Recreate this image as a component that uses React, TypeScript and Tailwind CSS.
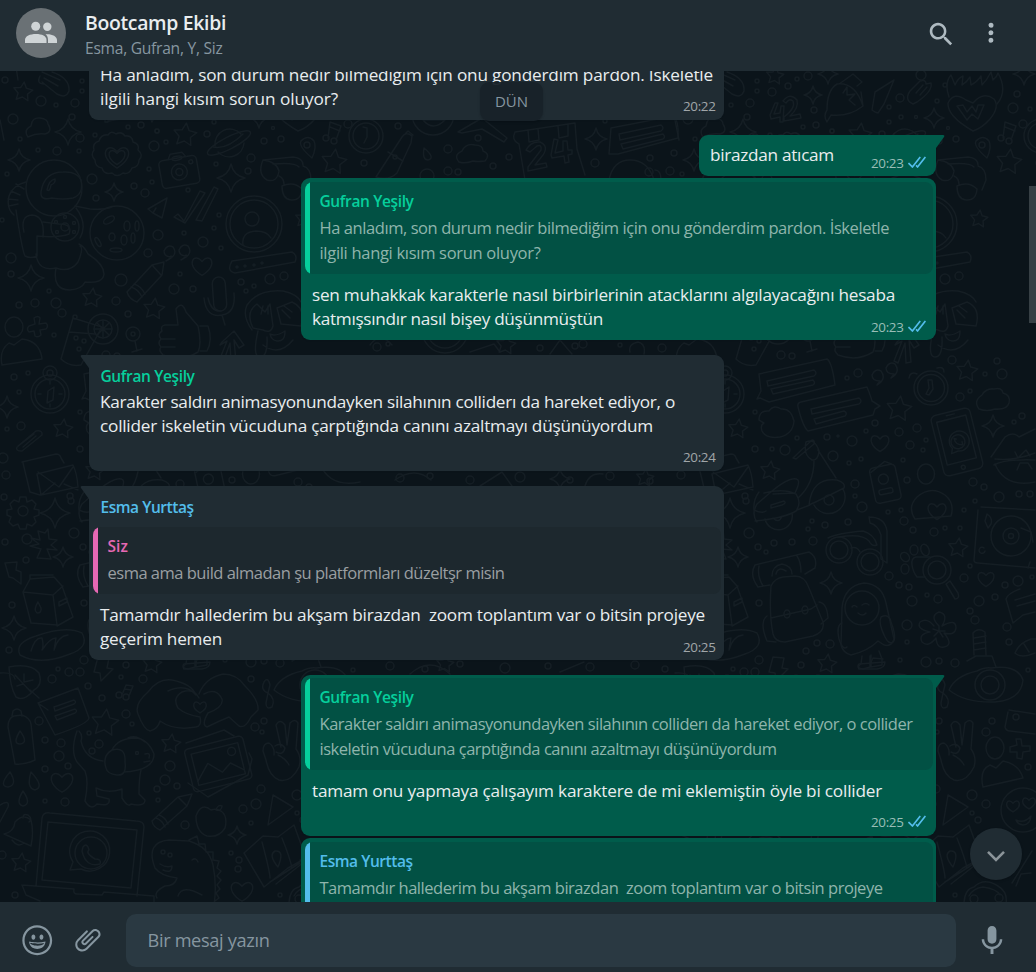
import { useLayoutEffect, useRef, useState, type ReactNode } from "react";

/* ---------- Text line that fills an exact measure ---------- */

function Line({ w, className = "", children }: { w: number; className?: string; children: string }) {
  const ref = useRef<HTMLSpanElement>(null);
  const [spacing, setSpacing] = useState(0);
  useLayoutEffect(() => {
    const el = ref.current;
    if (!el) return;
    el.style.letterSpacing = "0px";
    setSpacing((w - el.getBoundingClientRect().width) / children.length);
  }, [w, children]);
  return (
    <span className={`block whitespace-pre ${className}`}>
      <span ref={ref} style={{ letterSpacing: `${spacing}px` }}>
        {children}
      </span>
    </span>
  );
}

/* ---------- Wallpaper ---------- */

type P3 = [number, number, number];

const RINGS: P3[] = [
  [5, 80, 3], [41, 101, 5], [56, 105, 2], [75, 103, 4], [82, 91, 2], [13, 119, 5], [72, 117, 3], [80, 138, 4],
  [20, 139, 2], [95, 135, 2], [38, 150, 2], [57, 151, 4], [79, 151, 2], [7, 174, 2], [141, 125, 3], [154, 146, 5],
  [166, 142, 2], [207, 134, 3], [157, 131, 2], [264, 141, 3], [281, 139, 3], [216, 164, 2], [251, 158, 4], [248, 171, 3],
  [188, 190, 2], [92, 179, 5], [134, 186, 3], [145, 193, 4], [149, 169, 2], [96, 198, 3], [152, 182, 2], [158, 235, 5],
  [203, 242, 5], [221, 248, 2], [219, 215, 2], [214, 228, 2], [148, 253, 4], [184, 233, 2], [121, 280, 6], [174, 289, 5],
  [180, 274, 2], [193, 289, 3], [116, 301, 4], [128, 314, 3], [56, 303, 5], [35, 303, 4], [62, 313, 4], [19, 305, 3],
  [49, 291, 2], [11, 258, 5], [11, 274, 3], [241, 282, 3], [254, 286, 2], [270, 279, 5], [284, 276, 4], [246, 291, 2],
  [54, 335, 2], [75, 317, 2], [2, 220, 2], [14, 377, 3], [28, 373, 2], [19, 392, 2], [21, 426, 4], [80, 449, 3],
  [80, 412, 2], [7, 429, 2], [6, 475, 4], [3, 458, 5], [106, 355, 4], [117, 356, 3], [183, 373, 4], [172, 378, 2],
  [277, 360, 4], [310, 374, 2], [322, 361, 3], [327, 374, 5], [285, 397, 4], [295, 391, 2], [200, 423, 3], [191, 431, 2],
  [224, 432, 4], [242, 428, 4], [251, 440, 2], [248, 450, 2], [235, 445, 4], [177, 441, 5], [152, 437, 3], [163, 436, 1],
  [110, 450, 5], [158, 456, 5], [122, 438, 2], [97, 449, 2], [174, 463, 2], [186, 459, 2], [180, 484, 4], [180, 496, 2],
  [187, 507, 5], [228, 460, 2], [232, 480, 3], [298, 482, 4], [309, 487, 3], [324, 497, 5], [300, 501, 2], [289, 510, 2],
  [213, 512, 2], [226, 510, 2], [229, 521, 4], [259, 532, 4], [238, 530, 3], [285, 528, 2], [270, 528, 2], [344, 494, 3],
  [355, 494, 3], [339, 422, 2], [347, 416, 3], [71, 501, 3], [74, 533, 5], [70, 496, 3], [4, 497, 3], [27, 539, 5],
  [5, 542, 3], [26, 560, 3], [137, 521, 2], [133, 529, 2], [150, 525, 3], [173, 522, 3], [138, 541, 4], [117, 542, 3],
  [99, 543, 3], [91, 552, 2], [83, 547, 3], [214, 576, 4], [224, 585, 3], [234, 587, 3], [237, 601, 5],
  [252, 595, 2], [263, 599, 4], [289, 578, 4], [295, 566, 2], [304, 601, 5], [320, 597, 3], [330, 585, 3], [343, 581, 5],
  [357, 577, 2], [295, 611, 3], [300, 620, 4], [232, 625, 5], [232, 642, 2], [225, 660, 2], [251, 662, 5], [264, 661, 3],
  [280, 663, 4], [332, 627, 4], [334, 642, 3], [353, 670, 2], [12, 605, 3], [84, 603, 3], [9, 650, 3], [84, 660, 4],
  [131, 651, 3], [142, 643, 3], [155, 644, 4], [58, 669, 2], [69, 672, 4], [80, 672, 4], [52, 679, 4],
  [88, 686, 3], [126, 665, 3], [143, 679, 4], [121, 677, 2], [102, 698, 3], [39, 721, 4], [89, 733, 2], [99, 744, 4],
  [92, 751, 3], [45, 740, 3], [61, 743, 4], [59, 756, 5], [68, 766, 3], [45, 769, 3], [126, 714, 4], [132, 724, 2],
  [170, 766, 5], [165, 780, 5], [177, 786, 3], [157, 789, 3], [158, 800, 2], [65, 802, 4], [45, 801, 2], [264, 721, 3],
  [255, 727, 4], [262, 732, 2], [261, 789, 4], [256, 804, 5], [243, 809, 4], [251, 823, 2], [297, 795, 5], [185, 825, 4],
  [239, 860, 3], [231, 853, 2], [238, 869, 3], [2, 855, 4], [15, 895, 3], [280, 895, 2], [251, 679, 3], [297, 813, 2],
  [303, 820, 3], [311, 804, 4], [311, 732, 4], [317, 721, 3], [353, 767, 3], [82, 81, 2],
  [97, 92, 4], [113, 86, 3], [133, 76, 4], [122, 79, 2], [139, 110, 3], [157, 131, 2], [128, 127, 2],
  [225, 98, 4], [226, 117, 2], [214, 122, 2], [241, 117, 1.5], [262, 101, 2], [273, 128, 1.5], [338, 108, 5], [355, 109, 2], [342, 94, 3],
  [246, 75, 5], [214, 107, 2], [270, 85, 2], [348, 124, 4], [398, 126, 3], [478, 138, 3], [448, 149, 4], [448, 171, 4], [458, 172, 3], [493, 166, 3], [509, 157, 3],
  [427, 176, 7], [590, 111, 3], [605, 121, 2], [595, 163, 4], [650, 158, 3], [670, 171, 4], [649, 172, 4], [674, 153, 3],
  [364, 163, 3], [377, 347, 4], [388, 344, 2], [575, 346, 3], [583, 344, 4], [620, 345, 2], [662, 348, 4], [540, 348, 3],
  [400, 478, 4], [430, 476, 3], [470, 480, 4], [520, 477, 5], [570, 480, 3], [610, 476, 4], [650, 481, 3], [390, 666, 4],
  [425, 669, 3], [460, 664, 3], [505, 668, 5], [548, 666, 3], [590, 667, 4], [635, 665, 4], [665, 669, 3],
];

const STARS: P3[] = [
  [23, 92, 10], [185, 135, 12], [334, 162, 13], [92, 298, 10], [154, 309, 11], [63, 429, 10], [292, 371, 11],
  [224, 409, 13], [95, 471, 10], [283, 548, 10], [152, 664, 10], [105, 723, 14], [171, 744, 10], [21, 863, 10],
  [304, 219, 9], [506, 345, 10], [100, 76, 9], [445, 664, 9], [645, 478, 9],
];

const SPARKS: P3[] = [
  [68, 132, 13], [19, 160, 11], [231, 178, 14], [114, 192, 9], [31, 278, 13], [7, 407, 11], [318, 426, 11],
  [55, 513, 15], [63, 557, 10], [14, 628, 12], [156, 583, 11], [237, 835, 9], [138, 95, 9], [153, 74, 10],
  [259, 118, 10], [596, 139, 11], [349, 74, 11], [560, 479, 10],
];

const HEARTS: P3[] = [
  [117, 157, 13], [117, 157, 9], [202, 266, 11], [205, 443, 10], [262, 511, 10], [311, 579, 9], [200, 707, 7],
  [62, 782, 12], [242, 891, 12], [338, 806, 7], [354, 803, 7],
];

const starPath = (cx: number, cy: number, r: number) => {
  let d = "";
  for (let i = 0; i < 10; i++) {
    const a = (i * Math.PI) / 5 - Math.PI / 2 + 0.12;
    const q = i % 2 ? r * 0.5 : r;
    d += `${i ? "L" : "M"}${(cx + q * Math.cos(a)).toFixed(1)} ${(cy + q * Math.sin(a)).toFixed(1)}`;
  }
  return d + "Z";
};

const sparkPath = (x: number, y: number, r: number) => {
  const k = r * 0.18;
  return `M${x} ${y - r}Q${x + k} ${y - k} ${x + r} ${y}Q${x + k} ${y + k} ${x} ${y + r}Q${x - k} ${y + k} ${x - r} ${y}Q${x - k} ${y - k} ${x} ${y - r}Z`;
};

const heartPath = (x: number, y: number, r: number) =>
  `M${x} ${y + r * 0.85}C${x - r * 1.6} ${y - r * 0.1} ${x - r * 0.7} ${y - r * 1.3} ${x} ${y - r * 0.4}C${x + r * 0.7} ${y - r * 1.3} ${x + r * 1.6} ${y - r * 0.1} ${x} ${y + r * 0.85}Z`;

function Doodles() {
  return (
    <g>
      {RINGS.map(([x, y, r], i) => <circle key={i} cx={x} cy={y} r={r} />)}
      {STARS.map(([x, y, r], i) => <path key={i} d={starPath(x, y, r)} />)}
      {SPARKS.map(([x, y, r], i) => <path key={i} d={sparkPath(x, y, r)} />)}
      {HEARTS.map(([x, y, r], i) => <path key={i} d={heartPath(x, y, r)} />)}

      {/* glove, cloud, badge */}
      <path d="M40 76q-4 8 4 8m-2-12l18 8m-16-2l14 8M52 72q18 6 17 19q-3 8-12 3L42 82" />
      <path d="M28 137q-5-7 3-11q1-9 9-8q8 1 8 6q5 8-3 10q-9-1-17 3z" />
      <path d="M116 134q6-3 9 2q7-1 8 6q7 2 5 8q6 5 1 10q0 7-7 8q-3 7-9 5q-6 5-11 0q-8 2-10-5q-7-1-7-8q-5-5-1-10q-2-7 5-9q2-7 9-6q3-5 8-1z" />
      {/* planet */}
      <path d="M215 146a15 15 0 0 1 26-12M218 152a15 15 0 0 0 26-9" />
      <ellipse cx="229" cy="143" rx="24" ry="6" transform="rotate(-27 229 143)" />
      <path d="M213 147q14 3 30-13" />
      {/* camera */}
      <g transform="rotate(-10 179 170)">
        <rect x="160" y="158" width="38" height="28" rx="4" />
        <path d="M170 158l3-5h12l3 5" />
        <ellipse cx="179" cy="158" rx="5" ry="2" />
        <circle cx="179" cy="172" r="8" />
        <circle cx="179" cy="172" r="3.5" />
        <circle cx="192" cy="164" r="2" />
      </g>
      {/* pin, music */}
      <path d="M312 158q-14-12-11-17q7-7 13 0q3 6-2 17z" />
      <circle cx="307" cy="145" r="3" />
      <path d="M328 138l2-16 11 4-5 14M330 127l10 4" />
      <circle cx="326" cy="138" r="3" /><circle cx="334" cy="141" r="3" />
      {/* astronaut */}
      <circle cx="54" cy="188" r="28" />
      <path d="M41 192q3-20 22-20q14-1 18 8q3 14-8 18q-10 2-21 0q-12 3-11-6z M47 190q2-10 8-11q1 4-4 6q-1 7-4 5z" />
      <path d="M26 182q-13 3-17 14q-3 12 5 19m2-31l8 5m-13 2l9 4m-12 4l10 1m-9 6l9-2M16 210q6 40 9 46q6 3 12 0v-20q22 2 32-2q4-10-10-10l-16-2M24 232q-4-16 8-17q13 1 11 22M76 208q12 16 4 30M36 254q2 18 20 14q14 5 22-6q6-14 2-16M56 268q-4 22 14 22q12-1 15-8q18 2 19-8q0-10-16-20q-4-8-9-10M75 206l15 3q14 1 22-2" />
      <circle cx="65" cy="227" r="14" /><circle cx="65" cy="227" r="4" />
      <circle cx="65" cy="217" r="1.5" /><circle cx="74" cy="223" r="1.5" /><circle cx="74" cy="232" r="1.5" /><circle cx="56" cy="222" r="1.5" /><circle cx="57" cy="232" r="1.5" />
      {/* moon */}
      <circle cx="117" cy="233" r="27" />
      <ellipse cx="109" cy="220" rx="6" ry="3" transform="rotate(-30 109 220)" /><ellipse cx="127" cy="226" rx="3" ry="5" /><ellipse cx="112" cy="237" rx="3" ry="4" />
      <ellipse cx="124" cy="240" rx="3" ry="5" /><ellipse cx="137" cy="226" rx="2" ry="5" /><ellipse cx="116" cy="250" rx="6" ry="2" /><ellipse cx="133" cy="238" rx="2" ry="5" /><ellipse cx="98" cy="242" rx="2" ry="5" transform="rotate(-30 98 242)" />
      {/* paper plane, ticks */}
      <path d="M167 198l-19 11 5 4 9 5zM153 213l3-5" />
      <path d="M174 217l4-3 6 7 16-30 5 2-20 30zM196 220l18-33 4 2-16 32z" />
      {/* sunglasses */}
      <path d="M263 160q-6 14 4 20q10 3 12-9q-2-9-16-11zM282 186q0 13 9 14q10 1 11-11q-8-8-20-3zM279 176q5 2 5 9M263 160l30-3q10 1 10 8m-4 2q-4-5-26-3M303 166q8 2 8 14l-4 10" />
      {/* contact */}
      <circle cx="254" cy="224" r="28" /><circle cx="254" cy="224" r="24" /><circle cx="252" cy="219" r="7" />
      <path d="M243 245q-2-13 13-14q11 0 15 7" />
      {/* band */}
      <path d="M232 261l60-9q6 3 3 10l-60 11q-9-2-3-12z" />
      <circle cx="237" cy="267" r="1" /><circle cx="245" cy="266" r="1" /><circle cx="254" cy="265" r="1" /><circle cx="262" cy="263" r="1" />
      {/* quotes */}
      <path d="M172 257q-8 0-8-6q3-7 9-4q6 8-7 14q5-3 5-5zM187 256q-8 0-8-6q3-7 9-4q6 8-7 14q5-3 5-5zM205 381q-8 0-8-6q3-7 9-4q6 8-4 14zM219 374q-8 0-8-6q3-7 9-4q6 8-4 14z" />
      {/* pencils */}
      <path d="M164 262l-2 13-25 27q-8-3-10-10l25-27zM152 265l9 10M131 287q7 2 11 10M134 284q7 2 11 10" />
      <path d="M192 794l-5 12-27 24q-7-3-8-9l26-24zM178 797l9 9M156 818q6 2 9 9M159 815q6 2 9 9" />
      {/* microphone */}
      <rect x="213" y="277" width="13" height="34" rx="6.5" transform="rotate(-4 220 294)" />
      <path d="M204 298q2 20 18 17q14-2 12-22M208 298q3 14 13 13M222 315l3 10" />
      {/* bandage cross, people */}
      <path d="M34 318q4-3 6 0l-1 6 7-1q3 3 0 6l-6 1 1 5q-3 3-6 1l-1-5-5 1q-3-3 0-6l6-2z" />
      <ellipse cx="14" cy="327" rx="9" ry="10" /><path d="M2 365q-3-15 7-22l5 2 8-6q18 2 20 20z" />
      <ellipse cx="320" cy="748" rx="9" ry="11" /><path d="M308 787q-4-17 7-22l6 3 7-7q16 3 20 17z" />
      <path d="M341 739l5 0 1 7 8 0 0 5-7 1-1 7-5-1 0-6-7 0 0-5 7-2z" />
      {/* drink */}
      <path d="M73 318l29 9-21 38q-12 2-20-6zM69 332l26 2" />
      <circle cx="103" cy="329" r="15" /><circle cx="103" cy="329" r="9" /><path d="M94 329h18M103 320v18M97 323l12 12M109 323l-12 12" />
      <circle cx="76" cy="338" r="2" /><circle cx="84" cy="341" r="2" /><circle cx="79" cy="349" r="2" />
      {/* lollipop, thumb */}
      <circle cx="133" cy="334" r="7" /><circle cx="133" cy="334" r="2" /><path d="M135 341l2 10m-5 1l10-3" />
      <path d="M178 325l-2-16q6-9 10 3l12 14q4 18 0 26q-16 10-35 3q-5-5-2-8q-4-4 0-8q-4-5 1-8q-2-5 3-6zM200 326h8q5 14-1 25h-7M161 339h14M162 347h13" />
      {/* arrow */}
      <path d="M222 342l12-11 10 14-5 3-5-8 2 22-5 1-1-20-7 20-4-2 8-20-7 4z" />
      {/* monkey */}
      <path d="M252 330q-10-14-5-25q11-16 36-14q14 3 18 11M253 328q-8-16 4-24l8 8 5-8 3 22q-2 8-10 4zM292 302q14 6 9 24l-20-2-4-16zM258 331q-6 26 2 26q8 0 7-20M270 334q6 3 15-3q0 11-8 10q-6-1-7-7zM263 345q16 12 30-5M263 306l-2 8M268 306v8M282 310l8 8M284 306l8 6" />
      {/* compass */}
      <circle cx="50" cy="394" r="19" /><circle cx="50" cy="394" r="15" /><circle cx="50" cy="373" r="7" /><circle cx="50" cy="373" r="3" />
      <path d="M54 387l-1 13-6 3 1-12zM38 394h3M59 394h3M50 381v3M50 404v3" />
      {/* clip, envelopes */}
      <path d="M18 446l18-15q7-1 6 4l-20 16q-7 0-5-4l17-13M36 436l-13 11" />
      <path d="M22 462l34-8q4 0 5 4l3 5M37 474l36-9q4 8 5 22l-37 8zM38 472l21 15 14-20M23 463l7 29 10 3M41 495l14-12M64 484l14 6" />
      {/* speech bubbles */}
      <path d="M84 374l68-15q5 3 8 26l-66 17-9-4-3 1 4-8zM92 381l47-11q4 3 0 6l-46 10zM96 389l42-9q3 3 0 5l-40 9z" />
      <path d="M126 402l66-15q4 10 5 14l8 5-5 3-2 6-65 16q-5-4-10-24q-1-4 3-5zM136 409l48-11q4 3 0 6l-47 10zM139 419l30-8q4 2 1 5l-29 8z" />
      <path d="M84 420q0-10 10-9q5-7 12-2q10-1 13 12q-1 13-14 16q-14 2-18-6q-2-6 2-8z" />
      {/* clock, cloud */}
      <circle cx="256" cy="388" r="17" /><circle cx="256" cy="388" r="13.5" /><path d="M253 380h4l1 9-4 6-3-1 3-6zM234 378q1-7 8-4M262 368q7-2 7 4" />
      <path d="M304 409q-6-8 3-14q4-7 12-6q8-2 9 4q8 2 6 10q-2 7-14 6q-8 3-16 0z" />
      {/* tablet */}
      <g transform="rotate(-14 282 442)">
        <rect x="262" y="411" width="40" height="62" rx="5" /><rect x="267" y="418" width="30" height="44" />
        <path d="M278 414h8" /><circle cx="282" cy="468" r="2" />
        <path d="M274 452l2-5a10 10 0 1 1 5 4z" /><circle cx="283" cy="442" r="7" /><path d="M280 438q0 7 7 8M280 438l2 1M287 446v-3" />
      </g>
      {/* lips */}
      <path d="M316 457l14-20q8-6 14 0l16-8M320 459q20 2 40-6M320 464q10 24 40 18M319 465q10-6 41-5M340 452l3 6 8-8 4 6M342 470l3-7 8 0 4 6" />
      {/* scooter */}
      <path d="M118 458l19-18q3 0 2 4l-18 15zM131 442q9-4 13 9q-1 10-7 9q-9-5-6-18zM139 460q0 24-16 38M143 450l18 28M82 522q-6-8 0-18l15-13q20-16 26-11q2 3-3 13l-22 1M80 521q30-3 41-10q6-8 0-17q-12-6-32-1M134 505q3-28 28-25q9 3 7 8q-26 13-35 17zM122 510l13-5M96 505l13-4q3 2-2 4l-11 3zM90 519a13.500 13.500 0 1 0 27-6M98 518q6 6 9-2M139 505a14 14 0 1 0 29-16" />
      <circle cx="154" cy="500" r="5" />
      {/* id card */}
      <g transform="rotate(-12 209 482)"><rect x="197" y="466" width="26" height="36" rx="4" /><path d="M198 470l16-8 6 4" /><circle cx="209" cy="479" r="5" /><rect x="202" y="489" width="14" height="5" rx="2" /></g>
      <ellipse cx="251" cy="474" rx="8.500" ry="10" />
      <path d="M240 519q-8-12 2-22q14-12 28-2q10 8 6 21zM240 519l10-1" />
      {/* gear */}
      <path d="M20 497h6l1 5 5-2 4 4-2 5 5 1v5l-5 2 2 5-4 4-5-2-1 5h-6l-2-5-5 2-4-4 2-5-4-2v-5l5-1-2-5 4-4 5 2z" /><circle cx="23" cy="511" r="5" />
      {/* windmill */}
      <path d="M38 531l7 2 3-4 1 10 8 1-6 5 6 5-10-1 4 10-14-1 4-9-11-3 9-2-8-6 9 2z" />
      {/* headphones */}
      <path d="M84 492q-6 8-5 18q8 4 12 1" />
      {/* turntable */}
      <path d="M306 507l54 3M303 510l-4 50q0 3 4 3l57 5" /><circle cx="336" cy="536" r="20" /><circle cx="336" cy="536" r="8" /><circle cx="336" cy="536" r="2.500" />
      <path d="M312 514q6 4 4 10l-3 4-3-7zM346 528l10 4 2 10M309 548a3 3 0 1 0 1 3" />
      {/* glasses */}
      <circle cx="164" cy="550" r="13" /><circle cx="164" cy="550" r="9" /><circle cx="195" cy="562" r="13" /><circle cx="195" cy="562" r="9" />
      <path d="M153 538q10-5 35-7q11 3 14 14q-5 2-8-4q-7-8-30-4M194 517q16 0 18 14v32l-6-4v-24q-3-10-11-12zM176 548q6-2 9 4" />
      {/* bolts */}
      <path d="M5 563l12-1-1 8 5 2 0 12-8-6-4-1zM98 657l11 1-2 10 6 1-12 12-1-8-6-1zM355 562l-2 6" />
      {/* milk */}
      <path d="M23 592l30 3 4 30-26-2zM23 592l7-13 24-2 8 9 11 31-16 9M53 595l10-9M30 579l0-4 23 0M38 602q-5 8-1 11q5 0 4-5zM59 602l8-4 0 4-8 4z" />
      {/* yoga mat and backpack */}
      <path d="M80 565l54-13q9 5 6 16l-10 6M80 565q-6 10 3 22l12-2M84 566q-2 10 4 20M122 556q4 6 4 16M97 576q0-10 10-12q10 2 10 10M101 574q2-8 10-3" />
      <path d="M96 586q4-8 12-9l12-1q10 0 14 12l14 34q2 10-10 14l-28 6q-10 0-12-8q-4-20-2-48zM96 618l40-9 6-4M92 616q-8 6 0 25l9 1M144 602q8 1 9 16l-7 6" /><ellipse cx="112" cy="614" rx="3" ry="4" /><ellipse cx="130" cy="610" rx="3" ry="4" />
      {/* paw, magnifier */}
      <ellipse cx="230" cy="557" rx="4" ry="5" transform="rotate(-40 230 557)" /><ellipse cx="239" cy="550" rx="4" ry="5" /><ellipse cx="250" cy="550" rx="4" ry="6" transform="rotate(-20 250 550)" /><ellipse cx="230" cy="569" rx="4" ry="5" />
      <path d="M255 557l-14 0q-5 1-4 8t5 12l8 0M271 584l4-3 8 12q2 6-3 6z" /><circle cx="262" cy="570" r="14" /><circle cx="262" cy="570" r="9" />
      {/* hooded figure */}
      <path d="M167 608q2-22 22-25q18 1 22 20l8 36q-2 8-10 6l-6-4q-10 10-27 14q-8-2-10-10z" /><circle cx="187" cy="608" r="17" />
      <path d="M177 607q2-3 5 0M187 605q4-3 7 0M183 613q5 4 8 0M167 623q-6 2-3 16q4 12 8 8M206 617q8-4 10 5q6 16 2 20q-4 3-8-5q-7-14-4-20zM187 656l-1 8q-6 4 2 5l7-2 0-11M196 655l0 12 11-2 0-6-3-8" />
      {/* flower */}
      <path d="M264 626q-10-10 0-14q10 2 3 14q14-8 14 2q-1 8-12 5q10 12 0 14q-7 2-8-9q-8 10-14 4q-4-8 8-10q-14-3-10-10q7-5 14 4M264 631l0-5M264 631l6 0M264 631l4 6M264 631l-5 5M264 631l-6-2" />
      {/* bread, leaf */}
      <path d="M20 655q-6-12 16-19q30-11 46-3q8 14-12 21q-30 12-50 1zM31 651q4-14 11-13q2 8 0 12q8-12 14-12l-2 12q4-14 14-15" />
      <path d="M9 667q22-4 30 6q4 12-5 17q-10 12-18 7q-6-10-7-30zM30 690l9 8M15 675l16 17M17 686l6-2M24 674l0 8 9-2" />
      {/* notes */}
      <path d="M38 703l40-15 11 30q-1 6-34 17zM38 703l10 7M54 707l20-7q3 2 0 4l-19 7zM55 716l20-7q3 2 0 4l-18 7z" />
      <path d="M122 695l4-10 7 1-4 10M125 689l6 1" /><circle cx="119" cy="695" r="3" /><circle cx="126" cy="697" r="3" />
      <path d="M345 589q-12 4-14 10l7 24 10-8 12-3M340 600l20-6M342 606l18-5" />
      <path d="M340 653q4-10 16-14l5 0M340 653q6 6 20 0M349 644l5 8" />
      {/* heart hands */}
      <path d="M138 714q-4-10 10-22q10-14 24-12q20 4 24 15q-10-12-28-4M138 714q6 16 12 17q8-2 10-10q14 10 36 6q6-1 4-10q-14-2-22-9q-6-10 4-16q12-4 17 6M199 694q6-16 24-20q14 0 22 12q14 14 13 24l-7 7q-6 12-12 9l-10-9q-10 4-22 10q-6-2 1-14q16-6 14-14q-6-12-18-5" />
      {/* snail, tray */}
      <path d="M184 664l26-2q0 6-8 7l-18 0q-2-3 0-5zM195 664l3-6 10 1M0 673q14-1 15 6" />
      {/* telephone */}
      <path d="M302 671q8-4 14-3q26-4 32 12q-2 20-28 22q-30 1-46-12q6-14 28-19zM292 661l9-5 16 0 4 11M299 655l-1-22q5-6 12-1l1 23M299 638l12-2M299 644l12-2M299 650l12-2" /><circle cx="315" cy="685" r="15" /><circle cx="315" cy="685" r="9" />
      <path d="M264 682q4-6 6 3l-2 8q-8-3-4-11zM268 693q8 6 4 14q-6 3-6-4z" />
      {/* bottle, drops */}
      <path d="M8 727q0-9 6-11l8-1q8 3 9 9l4 36q-10 5-20 4zM12 716l1-5q4-4 8 0l1 5M20 731q-8 13 0 13q9-1 0-13z" />
      <path d="M10 772q-12 14-2 15q10-2 2-15zM31 772q-5 16 4 18q10-3-4-18zM23 791q-8 13 0 15q9-2 0-15zM0 805q10-6 8 2l-8 15" />
      {/* dog */}
      <path d="M77 731q-7 20 0 31l8 9q4 10 0 30q6 10 12 3q14 3 12-5l-12-3-1-8q12 6 26 1l0 9q6 10 9 6q14 3 14-4l-6-6q0-16 2-24M79 731q4 4 2 10q4 18 22 20M106 768q-4-12 6-18q14-4 13 12q2 14-8 13q-10-1-11-7zM112 750q6-12 24-12q12 1 18 16q0 12-16 16q-8 2-14 2M128 738q8-4 17 4" /><circle cx="137" cy="753" r="1.500" /><path d="M145 754q6-2 4 4M144 762l6-1" />
      {/* photo */}
      <g transform="rotate(-14 218 763)"><rect x="188" y="742" width="60" height="44" rx="4" /><rect x="194" y="748" width="48" height="32" /><path d="M194 776l14-15 12 12 10-7 12 10" /><circle cx="234" cy="755" r="4" /></g>
      <path d="M186 743l38-13 10 6M188 783l20 14 40-22 4-16-3-6" />
      {/* peace hand */}
      <path d="M281 747l-5-22q4-7 9 0l2 20 3-22q5-5 8 0l-2 26q6 8 3 18q-8 16-20 13q-10-4-13-20l-3-9q0-8 6-8q6 4 5 12M275 746q6-4 10 2q-2 8-9 4M278 755q8 4 11 10" />
      {/* apple, play */}
      <path d="M211 810q-10-8-15 6q0 16 11 20q12 2 18-8q3-12-4-17q-5-3-10-1zM216 810q2-6 6-4q0 5-6 4zM273 795l20 12-25 18z" />
      {/* bell */}
      <path d="M4 834q10-2 11-12q8-9 16-2q3 12 0 26zM12 840q6 8 12 3M23 818q0-5 5-3q5 4 1 7" />
      {/* laptop */}
      <path d="M36 886l6-68q1-6 8-5l86 8q8 0 8 6l-7 69M42 880l6-58 89 8-6 58zM22 885l52 4q-1 5 3 5l25 1 2-3 50 4 0 8M22 885l4 10 14 6" />
      <circle cx="91" cy="853" r="16" /><path d="M70 870l3-8a20 20 0 1 1 8 7zM83 847q4-5 6 3q-4 3 6 9q7 0 5 5q-14 4-18-13z" />
      {/* dinosaur */}
      <path d="M155 868q-10-26 14-28l20 1q20 6 24 24q4 20 1 40M155 868q6 8 22 10q-2 8-12 8q-12 6-8 12M178 896q4-12 24-1M189 840l8-4 2 8 6 0 1 8 7 0 0 8 6 1-2 7 4 3-4 5 4 4-4 5 3 4-4 4 3 5-4 3M160 864q6 4 12 2q0 8-9 4M192 860q4-3 6 2" /><circle cx="163" cy="852" r="2" /><circle cx="170" cy="855" r="2" />
      {/* map */}
      <path d="M244 853l19-17 15 1 16-12 12 33-18 10-24 19zM262 842q8 30 8 36M282 838q8 20 10 30M278 867q-10-12-3-16q10-1 3 16zM270 882l30-19M300 860l4 2-28 22" />
      {/* face with hearts, vehicle */}
      <circle cx="348" cy="810" r="22" /><path d="M341 820q8 4 15-4q-1 9-8 9q-6-1-7-5z" />
      <path d="M334 710l26 4M333 712l-3 15q1 4 5 4l25 3" /><circle cx="341" cy="717" r="3" />
      <path d="M289 905q0-16 10-18q10-10 24-1q10 6 8 18M294 896q4-8 14-9q14 2 17 8" /><circle cx="299" cy="899" r="4" /><circle cx="324" cy="898" r="4" />
      <path d="M337 883l20-32M341 886l5-12 10-1" />
      {/* numerals */}
      <path d="M100 103l3 0-4 11 6-1 1-7 3 0-1 16-3 0 0-5-9 2-1-4zM108 101q7-9 14-1q2 8-7 16l10-2 1 4-17 3 0-4q12-9 9-16q-4-3-7 2z" />
      {/* rocket, glove, winged heart */}
      <path d="M152 122q-4-6 0-12q0-20 10-26q18-2 26 22q-14 11-32 9zM164 84q6-4 14-10l9 8-5 4M168 93l4-6 0 8 8-1-6 6 6 5M188 106l-2-14M200 92l19-12-10 24-6 9-3-1-3-2z" />
      <path d="M238 104q-9-4-3-13l10-10q6-2 6 3l5-1q2 8-14 19zM241 93l7-8M245 95l7-8" />
      <path d="M298 131q-26-15-25-28q6-12 18-3l7 3q10-12 21-4q6 8-4 20q-8 9-17 12zM282 106l6-1 4 7 5-6 4 6 2-7 6 0-6 14-6-5-5 6z" />
      <path d="M274 97q-5-14 2-22l4 10q3-7 8-9l-1 9q5-3 8-8l1 8q6-3 10-9l1 9q5-5 9-13l2 8q4-3 5-7q10 18-1 31" />
      <path d="M15 60l3 20M0 120l4 20" />
      {/* middle band */}
      <circle cx="366" cy="136" r="17" /><circle cx="366" cy="136" r="13" /><path d="M363 127l4 1 0 9-3 6" />
      <path d="M376 177l26-40q4-6 10-1l-1 7-14 30q-8 8-21 4zM405 134l3-3 5 4M388 152l15 9" /><circle cx="395" cy="157" r="2" />
      <path d="M424 148q-2 12 4 12q8-2-4-12zM459 162q-6-7 3-11q4-8 13-6q8 0 8 6q8 3 2 10q-8 1-12 0q-8 3-14 1z" />
      <circle cx="433" cy="114" r="21" /><path d="M423 120q10 12 22 0z" />
      <path d="M458 132l24-14 25 20-3 4-22-13-20 4z" />
      <path d="M515 132l60-9 2 26 8 26M515 132q-4 8 4 12l6 36M528 130l1 12 10-2-1-11M558 126l1 12 9-2 0-11" />
      <path d="M526 150q5-9 14-8q9 4 3 13l-8 10 11-2 1 4-19 4 0-4 13-17q1-6-4-4l-7 6zM554 139l4 1-3 13 8-2 0-10 4 0 1 9 4 0 0 4-4 1 1 7-4 1-1-7-12 2-1-3z" />
      <path d="M611 128l62-12q6 4 5 22l-60 16-9 0zM619 134l42-9q4 3 0 6l-41 9zM621 144l42-10q3 3 0 5l-40 10z" />
      <path d="M609 180q4-20 21-20q18 0 24 20M655 170q6 0 6 10" />
      <circle cx="445" cy="330" r="18" /><circle cx="445" cy="330" r="23" />
      <path d="M370 345q10-14 22 0M630 352q-2-8 8-10q8 2 6 12M470 352l24-8 6 8M550 354l10-14 12 14" />
      <path d="M395 480q20-14 36 0M480 486l22-14 10 14M585 486q4-14 18-12M410 674q20-18 40 0M560 672l24-10" />
    </g>
  );
}

function Wallpaper() {
  return (
    <svg className="absolute inset-0 h-full w-full" viewBox="0 71 1036 831" fill="none" stroke="#151e24" strokeWidth="1.5" strokeLinejoin="round" strokeLinecap="round" aria-hidden="true">
      <Doodles />
      <g transform="translate(675 0)">
        <Doodles />
      </g>
    </svg>
  );
}

/* ---------- Icons ---------- */

function DoubleTick() {
  return (
    <svg className="h-[18.75px] w-5 -translate-y-px text-[#53bdeb]" viewBox="0 0 16 15" fill="currentColor">
      <path d="m15.010 3.316-.478-.372a.365.365 0 0 0-.51.063L8.666 9.879a.32.32 0 0 1-.484.033l-.358-.325a.319.319 0 0 0-.484.032l-.378.483a.418.418 0 0 0 .036.541l1.320 1.266c.143.140.361.125.484-.033l6.272-8.048a.366.366 0 0 0-.064-.512zm-4.100 0-.478-.372a.365.365 0 0 0-.51.063L4.566 9.879a.32.32 0 0 1-.484.033L1.891 7.769a.366.366 0 0 0-.515.006l-.423.433a.364.364 0 0 0 .006.514l3.258 3.185c.143.140.361.125.484-.033l6.272-8.048a.365.365 0 0 0-.063-.510z" />
    </svg>
  );
}

function Tail({ side }: { side: "in" | "out" }) {
  return side === "in" ? (
    <svg className="absolute -left-[9px] top-0 h-4 w-[10px] text-[#202c33]" viewBox="0 0 10 16" fill="currentColor">
      <path d="M10 0H2Q0 0 1 2L9.300 13.500H10Z" />
    </svg>
  ) : (
    <svg className="absolute -right-[9px] top-0 h-4 w-[10px] text-[#005c4b]" viewBox="0 0 10 16" fill="currentColor">
      <path d="M0 0H8Q10 0 9 2L.700 13.500H0Z" />
    </svg>
  );
}

/* ---------- Messages ---------- */

const GREEN = "text-[#06cf9c]";
const BLUE = "text-[#53bdeb]";
const PINK = "text-[#e668b3]";

type TextLine = [string, number];

function Name({ line, color }: { line: TextLine; color: string }) {
  return <Line w={line[1]} className={`text-[15.5px] font-semibold leading-[22px] ${color}`}>{line[0]}</Line>;
}

function Body({ lines }: { lines: TextLine[] }) {
  return (
    <div className="pl-[7.500px] text-[17.200px] leading-[23.75px] text-[#e9edef]">
      {lines.map(([t, w]) => <Line key={t} w={w}>{t}</Line>)}
    </div>
  );
}

function Quote({ side, name, color, bar, lines }: { side: "in" | "out"; name: TextLine; color: string; bar: string; lines: TextLine[] }) {
  const out = side === "out";
  return (
    <div className={`flex overflow-hidden rounded-[8px] ${out ? "bg-[#025144]" : "bg-[#1d282e]"}`}>
      <div className={`w-[5px] shrink-0 ${bar}`} />
      <div className={`px-[10px] pb-[9px] pt-[8px] text-[16.500px] leading-[25px] ${out ? "text-[#8fb5ac]" : "text-[#9a9fa2]"}`}>
        <Name line={name} color={color} />
        <div className="pt-[3px]">
          {lines.map(([t, w]) => <Line key={t} w={w}>{t}</Line>)}
        </div>
      </div>
    </div>
  );
}

function Meta({ side, time, className }: { side: "in" | "out"; time: string; className: string }) {
  const out = side === "out";
  return (
    <div className={`flex items-center justify-end gap-[3px] text-[13.400px] leading-[19px] ${out ? "pr-[6px] text-[#99beb7]" : "pr-[5px] text-[#a0a6a9]"} ${className}`}>
      <Line w={32.500}>{time}</Line>
      {out && <DoubleTick />}
    </div>
  );
}

function Bubble({ side, tail, className, children }: { side: "in" | "out"; tail?: boolean; className: string; children: ReactNode }) {
  const out = side === "out";
  const corner = tail ? (out ? "rounded-tr-none" : "rounded-tl-none") : "";
  return (
    <div className={`relative flex shrink-0 flex-col rounded-[9px] px-[3.5px] shadow-[0_1px_1px_rgba(11,20,26,0.3)] ${out ? "self-end bg-[#005c4b]" : "self-start bg-[#202c33]"} ${corner} ${className}`}>
      {tail && <Tail side={side} />}
      {children}
    </div>
  );
}

function Conversation() {
  return (
    <div className="relative flex h-full flex-col pl-[89px] pr-[100px]">
      <Bubble side="in" className="-mt-[16px] h-[65px] w-[635px] pt-[8px]">
        <Body lines={[["Ha anladım, son durum nedir bilmediğim için onu gönderdim pardon. İskeletle", 613], ["ilgili hangi kısım sorun oluyor?", 238]]} />
        <Meta side="in" time="20:22" className="-mt-[13.500px]" />
      </Bubble>

      <Bubble side="out" tail className="mt-[15px] h-[41px] w-[237px] pt-[8px]">
        <Body lines={[["birazdan atıcam", 124]]} />
        <Meta side="out" time="20:23" className="-mt-[13px]" />
      </Bubble>

      <Bubble side="out" className="mt-[2px] h-[162px] w-[635px] pt-[4px]">
        <Quote side="out" name={["Gufran Yeşily", 94]} color={GREEN} bar="bg-[#06cf9c]" lines={[["Ha anladım, son durum nedir bilmediğim için onu gönderdim pardon. İskeletle", 569.500], ["ilgili hangi kısım sorun oluyor?", 221]]} />
        <div className="h-[9px]" />
        <Body lines={[["sen muhakkak karakterle nasıl birbirlerinin atacklarını algılayacağını hesaba", 583], ["katmışsındır nasıl bişey düşünmüştün", 291]]} />
        <Meta side="out" time="20:23" className="-mt-[13px]" />
      </Bubble>

      <Bubble side="in" tail className="mt-[15px] h-[116px] w-[635px] pt-[10px]">
        <div className="mb-[3px] px-[8px]"><Name line={["Gufran Yeşily", 94]} color={GREEN} /></div>
        <Body lines={[["Karakter saldırı animasyonundayken silahının colliderı da hareket ediyor, o", 575], ["collider iskeletin vücuduna çarptığında canını azaltmayı düşünüyordum", 553]]} />
        <Meta side="in" time="20:24" className="mt-[10.500px]" />
      </Bubble>

      <Bubble side="in" tail className="mt-[15px] h-[174px] w-[635px] pt-[10px]">
        <div className="mb-[9px] px-[8px]"><Name line={["Esma Yurttaş", 93]} color={BLUE} /></div>
        <Quote side="in" name={["Siz", 20.500]} color={PINK} bar="bg-[#e668b3]" lines={[["esma ama build almadan şu platformları düzeltşr misin", 397]]} />
        <div className="h-[9px]" />
        <Body lines={[["Tamamdır hallederim bu akşam birazdan  zoom toplantım var o bitsin projeye", 605], ["geçerim hemen", 122]]} />
        <Meta side="in" time="20:25" className="-mt-[13px]" />
      </Bubble>

      <Bubble side="out" tail className="mt-[15px] h-[161px] w-[635px] pt-[3px]">
        <Quote side="out" name={["Gufran Yeşily", 94]} color={GREEN} bar="bg-[#06cf9c]" lines={[["Karakter saldırı animasyonundayken silahının colliderı da hareket ediyor, o collider", 593], ["iskeletin vücuduna çarptığında canını azaltmayı düşünüyordum", 457]]} />
        <div className="h-[8.500px]" />
        <Body lines={[["tamam onu yapmaya çalışayım karaktere de mi eklemiştin öyle bi collider", 570]]} />
        <Meta side="out" time="20:25" className="mt-[11px]" />
      </Bubble>

      <Bubble side="out" className="mt-[2px] h-[162px] w-[635px] pt-[4px]">
        <Quote side="out" name={["Esma Yurttaş", 93]} color={BLUE} bar="bg-[#53bdeb]" lines={[["Tamamdır hallederim bu akşam birazdan  zoom toplantım var o bitsin projeye", 563]]} />
      </Bubble>
    </div>
  );
}

/* ---------- Page ---------- */

export default function App() {
  return (
    <div className="flex h-[972px] w-[1036px] flex-col overflow-hidden bg-[#0b141a] font-['Open_Sans','Noto_Sans',sans-serif]">
      <header className="flex h-[71px] shrink-0 items-start bg-[#202c33] pl-4">
        <svg className="mt-2 h-[50px] w-[50px]" viewBox="0 0 50 50">
          <circle cx="25" cy="25" r="25" fill="#6a7175" />
          <g fill="#cfd4d6">
            <circle cx="19.700" cy="18.300" r="4.500" />
            <circle cx="31.300" cy="18.800" r="4.200" />
            <path d="M9 35v-3c0-4 5-6 11-6s10.500 2 10.500 6v3z" />
            <path d="M29.500 26.300c6-.6 11.500 1.700 11.500 5.700v3h-9v-3c0-2.600-.9-4.400-2.500-5.700z" />
          </g>
        </svg>
        <div className="ml-[19px] mt-[9px] flex-1">
          <h1><Line w={141} className="text-[19.400px] font-semibold leading-[27px] text-[#e9edef]">Bootcamp Ekibi</Line></h1>
          <Line w={137.500} className="text-[15.600px] leading-[24px] text-[#8696a0]">Esma, Gufran, Y, Siz</Line>
        </div>
        <div className="mr-[30px] mt-[19px] flex gap-5 text-[#aebac1]">
          <svg className="h-[30px] w-[30px]" viewBox="0 0 24 24" fill="currentColor">
            <path d="M15.900 14.300H15l-.3-.3c1-1.100 1.600-2.700 1.600-4.300 0-3.700-3-6.700-6.700-6.700S3 6 3 9.700s3 6.700 6.700 6.700c1.600 0 3.200-.6 4.300-1.600l.3.3v.8l5.100 5.100 1.500-1.500-5-5.200zm-6.200 0c-2.600 0-4.600-2.100-4.600-4.600s2.100-4.600 4.600-4.600 4.600 2.100 4.600 4.600-2 4.600-4.600 4.600z" />
          </svg>
          <svg className="h-[30px] w-[30px]" viewBox="0 0 24 24" fill="currentColor">
            <path d="M12 7a2 2 0 1 0-.001-4.001A2 2 0 0 0 12 7zm0 2a2 2 0 1 0-.001 3.999A2 2 0 0 0 12 9zm0 6a2 2 0 1 0-.001 3.999A2 2 0 0 0 12 15z" />
          </svg>
        </div>
      </header>

      <main className="relative h-[831px] shrink-0 overflow-hidden">
        <Wallpaper />
        <Conversation />
        <div className="absolute left-[480px] top-[11px] flex h-[39px] w-[63px] items-center justify-center rounded-[9px] bg-[#182229]/95 shadow-sm">
          <Line w={33} className="text-[15px] text-[#8696a0]">DÜN</Line>
        </div>
        <div className="absolute right-0 top-[115px] h-[137px] w-[7px] bg-[#374045]" />
        <button className="absolute right-[14px] top-[757px] flex h-[52px] w-[52px] items-center justify-center rounded-full bg-[#202c33] shadow">
          <svg className="mt-[3px] h-3 w-5 text-[#8b9499]" viewBox="0 0 20 12" fill="none" stroke="currentColor" strokeWidth="2.600">
            <path d="m2 1.800 8 8 8-8" />
          </svg>
        </button>
      </main>

      <footer className="flex h-[70px] shrink-0 items-start bg-[#202c33] text-[#8696a0]">
        <svg className="ml-[20.500px] mt-[22px] h-[32.500px] w-[32.500px]" viewBox="0 0 24 24" fill="currentColor">
          <path d="M9.153 11.603c.795 0 1.439-.879 1.439-1.962s-.644-1.962-1.439-1.962-1.439.879-1.439 1.962.644 1.962 1.439 1.962zm-3.204 1.362c-.026-.307-.131 5.218 6.063 5.551 6.066-.25 6.066-5.551 6.066-5.551-6.078 1.416-12.129 0-12.129 0zm11.363 1.108s-.669 1.959-5.051 1.959c-3.505 0-5.388-1.164-5.607-1.959 0 0 5.912 1.055 10.658 0zM11.804 1.011C5.609 1.011.978 6.033.978 12.228s4.826 10.761 11.021 10.761S23.020 18.423 23.020 12.228c.001-6.195-5.021-11.217-11.216-11.217zM12 21.354c-5.273 0-9.381-3.886-9.381-9.159s3.942-9.548 9.215-9.548 9.548 4.275 9.548 9.548c-.001 5.272-4.109 9.159-9.382 9.159zm3.108-9.751c.795 0 1.439-.879 1.439-1.962s-.644-1.962-1.439-1.962-1.439.879-1.439 1.962.644 1.962 1.439 1.962z" />
        </svg>
        <svg className="ml-[20px] mt-[23px] h-[30px] w-[30px]" viewBox="0 0 24 24" fill="currentColor">
          <path d="M1.816 15.556v.002c0 1.502.584 2.912 1.646 3.972s2.472 1.647 3.974 1.647a5.580 5.580 0 0 0 3.972-1.645l9.547-9.548c.769-.768 1.147-1.767 1.058-2.817-.079-.968-.548-1.927-1.319-2.698-1.594-1.592-4.068-1.711-5.517-.262l-7.916 7.915c-.881.881-.792 2.250.214 3.261.959.958 2.423 1.053 3.263.215l5.511-5.512c.28-.28.267-.722.053-.936l-.244-.244c-.191-.191-.567-.349-.957.040l-5.506 5.506c-.18.18-.635.127-.976-.214-.098-.097-.576-.613-.213-.973l7.915-7.917c.818-.817 2.267-.699 3.230.262.5.501.802 1.100.849 1.685.051.573-.156 1.111-.589 1.543l-9.547 9.549a3.970 3.970 0 0 1-2.829 1.171 3.975 3.975 0 0 1-2.830-1.173 3.973 3.973 0 0 1-1.172-2.828c0-1.071.415-2.076 1.172-2.830l7.209-7.211c.157-.157.264-.579.028-.814L11.500 4.360a.572.572 0 0 0-.834.018l-7.205 7.207a5.577 5.577 0 0 0-1.645 3.971z" />
        </svg>
        <div className="ml-[23px] mt-3 flex h-[53px] w-[830px] items-center rounded-[10px] bg-[#2a3942] pl-[21.500px]">
          <Line w={122} className="text-[18.200px]">Bir mesaj yazın</Line>
        </div>
        <svg className="ml-[21px] mt-[23px] h-[30px] w-[30px]" viewBox="0 0 24 24" fill="currentColor">
          <path d="M11.999 14.942c2.001 0 3.531-1.530 3.531-3.531V4.350c0-2.001-1.530-3.531-3.531-3.531S8.469 2.350 8.469 4.350v7.061c0 2.001 1.530 3.531 3.530 3.531zm6.238-3.530c0 3.531-2.942 6.002-6.237 6.002s-6.237-2.471-6.237-6.002H3.761c0 4.001 3.178 7.297 7.061 7.885v3.884h2.354v-3.884c3.884-.588 7.061-3.884 7.061-7.885h-2z" />
        </svg>
      </footer>
    </div>
  );
}
